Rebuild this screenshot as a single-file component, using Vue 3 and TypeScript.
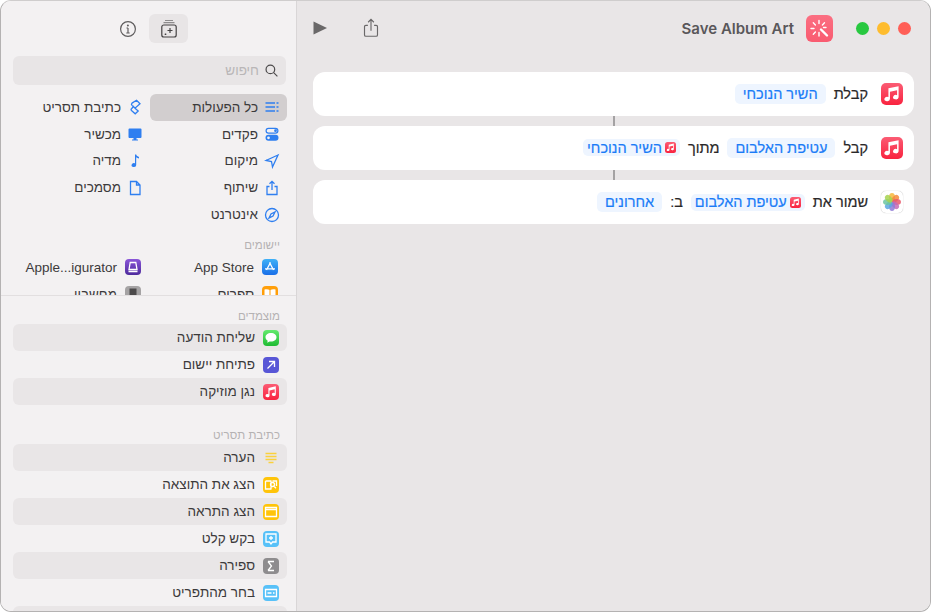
<script setup lang="ts">
interface SideItem {
  label: string
  tint: string
  icon: string
}

// filled beamed note, used on every Music tile
const musicPath =
  'M12.800 2.300L5.400 3.900V10.200a2 1.600 0 1 0 1.100 1.500V6.400L11.700 5.300V8.900a2 1.600 0 1 0 1.100 1.500z'

const categories: { label: string; icon: string; active?: boolean; solid?: boolean }[] = [
  { label: 'כל הפעולות', icon: 'M1.500 4h9.500M1.500 8h9.500M1.500 12h9.500M12.500 4h2M12.500 8h2M12.500 12h2', active: true },
  { label: 'כתיבת תסריט', icon: 'M9.500 1.300l3.500 3.400-5 4.500-3-2.800c-1-1-.6-1.700 0-2.300zM8 9.200l3.200 2.800-3 2.800-3.700-3.300c-.7-.7-.5-1.300 0-1.800L7 7' },
  { label: 'פקדים', solid: true, icon: 'M4.500 1.700h7a3 3 0 0 1 0 6h-7a3 3 0 0 1 0-6zM4.500 2.900a1.800 1.800 0 0 0 0 3.600h7a1.800 1.800 0 0 0 0-3.600zM11.500 3.300a1.400 1.400 0 1 1 0 2.800a1.400 1.400 0 0 1 0-2.800zM4.500 8.800h7a3 3 0 0 1 0 6h-7a3 3 0 0 1 0-6zM4.500 10.400a1.400 1.400 0 1 0 0 2.800a1.400 1.400 0 0 0 0-2.800z' },
  { label: 'מכשיר', solid: true, icon: 'M2.500 2.500h11a1 1 0 0 1 1 1v7.500a1 1 0 0 1-1 1H9.500v1.500h1.500v1H5v-1h1.500V12H2.500a1 1 0 0 1-1-1V3.500a1 1 0 0 1 1-1z' },
  { label: 'מיקום', icon: 'M14 2L2 7.500l5.500 1 1 5.500z' },
  { label: 'מדיה', solid: true, icon: 'M8 1.500h1.200c.3 1.500 1.600 2 2.800 2.400v1.600c-1.100-.2-2.100-.6-2.800-1.300V12a2.300 2 0 1 1-1.200-1.700z' },
  { label: 'שיתוף', icon: 'M5.500 6.500H3v8h10v-8h-2.500M8 10V1.500M5.500 3.800L8 1.300l2.500 2.500' },
  { label: 'מסמכים', icon: 'M3.500 1.500h6l3.500 3.500v9.500H3.500zM9.500 1.500V5H13' },
  { label: 'אינטרנט', icon: 'M8 1.500a6.500 6.500 0 1 1 0 13a6.500 6.500 0 0 1 0-13zM11 5L9 9 5 11l2-4z' }
]

const apps: SideItem[] = [
  { label: 'App Store', tint: 'tint-store', icon: 'M8.500 3.500L4.500 11M7.500 3.500l4 7.500M3 9.800h10' },
  { label: 'Apple...igurator', tint: 'tint-config', icon: 'M5.200 3.500h5.600l1.200 7h-8zM3.500 12.500h9' },
  { label: 'ספרים', tint: 'tint-books', icon: 'M2.500 3.500c2-.5 4-.3 5 .5v8.500c-1-.8-3-1-5-.5zM13.500 3.500c-2-.5-4-.3-5 .5v8.500c1-.8 3-1 5-.5z' },
  { label: 'מחשבון', tint: 'tint-calc', icon: 'M4.500 2.500h7v11h-7zM4.500 6h7' }
]

const pinned: SideItem[] = [
  { label: 'שליחת הודעה', tint: 'tint-msg', icon: 'M8 3C4.700 3 2.500 4.900 2.500 7.300c0 1.500.9 2.800 2.200 3.500l-.5 2 2.300-1.300c.5.100 1 .1 1.500.1 3.300 0 5.500-1.900 5.500-4.300S11.300 3 8 3z' },
  { label: 'פתיחת יישום', tint: 'tint-open', icon: 'M4.500 11.500l7-7M6 4.500h5.500V10' },
  { label: 'נגן מוזיקה', tint: 'tint-music', icon: musicPath }
]

const scripting: SideItem[] = [
  { label: 'הערה', tint: 'tint-note', icon: 'M2.500 3.500h11M2.500 6.500h11M2.500 9.500h11M5.500 12.500h5' },
  { label: 'הצג את התוצאה', tint: 'tint-yellow', icon: 'M2.500 4h6M2.500 4v8h6M9.500 4h4v5M8 4v8M9.500 5.500a2 2 0 1 1 0 4a2 2 0 0 1 0-4zM11 9.200l2 2' },
  { label: 'הצג התראה', tint: 'tint-yellow', icon: 'M2.500 3.500h11v9h-11zM2.500 5.500h11' },
  { label: 'בקש קלט', tint: 'tint-blue', icon: 'M3 3h10v8H9.500L8 13l-1.500-2H3zM8 5v4M6 7h4' },
  { label: 'ספירה', tint: 'tint-gray', icon: 'M5 3.500h6M5 12.500h6M5 3.500L8.500 8 5 12.500' },
  { label: 'בחר מהתפריט', tint: 'tint-blue', icon: 'M2.500 4.500h11v7h-11zM4.500 8h4M10 8h1.500' },
  { label: '', tint: 'tint-gray', icon: '' }
]

const petals = [
  { angle: 0, color: '#f6b73c' },
  { angle: 45, color: '#f58a3c' },
  { angle: 90, color: '#e8596b' },
  { angle: 135, color: '#c46bb5' },
  { angle: 180, color: '#8f7ad6' },
  { angle: 225, color: '#5aa7e0' },
  { angle: 270, color: '#6cc6a0' },
  { angle: 315, color: '#a6d24f' }
]
</script>

<template>
  <div class="window">
    <aside class="sidebar">
      <div class="side-toolbar">
        <svg class="info" viewBox="0 0 18 18">
          <circle cx="9" cy="9" r="7.400" />
          <path d="M9 8v5M7.500 8H9M7.300 13h3.400" />
          <circle class="dot" cx="8.900" cy="5.400" r="1" />
        </svg>
        <button class="add-btn">
          <svg viewBox="0 0 20 20">
            <path class="faint" d="M6 1.500h8M4.500 3.700h11" />
            <rect x="2.800" y="6" width="14.400" height="12" rx="2" />
            <path d="M11 9v5M8.500 11.500h5M6.500 14.500v1.600M5.700 15.300h1.600" />
          </svg>
        </button>
      </div>

      <div class="search" dir="rtl">
        <svg viewBox="0 0 16 16">
          <circle cx="6.800" cy="6.800" r="4.600" />
          <path d="M10.300 10.300l4 4" />
        </svg>
        <span>חיפוש</span>
      </div>

      <div class="cats-pane" dir="rtl">
        <div class="cat-grid">
          <div v-for="cat in categories" :key="cat.label" class="cat" :class="{ active: cat.active, solid: cat.solid }">
            <svg viewBox="0 0 16 16"><path :d="cat.icon" /></svg>
            <span>{{ cat.label }}</span>
          </div>
        </div>
        <div class="section-label apps-label">יישומים</div>
        <div class="cat-grid">
          <div v-for="app in apps" :key="app.label" class="app">
            <span class="app-icon" :class="app.tint">
              <svg viewBox="0 0 16 16"><path :d="app.icon" /></svg>
            </span>
            <span>{{ app.label }}</span>
          </div>
        </div>
      </div>

      <div class="actions-pane" dir="rtl">
        <div class="section-label">מוצמדים</div>
        <div v-for="item in pinned" :key="item.label" class="action">
          <span class="app-icon" :class="item.tint">
            <svg viewBox="0 0 16 16"><path :d="item.icon" /></svg>
          </span>
          <span>{{ item.label }}</span>
        </div>
        <div class="section-label second">כתיבת תסריט</div>
        <div v-for="item in scripting" :key="item.label" class="action">
          <span v-if="item.icon" class="app-icon" :class="item.tint">
            <svg viewBox="0 0 16 16"><path :d="item.icon" /></svg>
          </span>
          <span>{{ item.label }}</span>
        </div>
      </div>
    </aside>

    <main class="main">
      <header class="toolbar">
        <svg class="play" viewBox="0 0 14 14"><path d="M0.500 0.500L14 7 0.500 13.500z" /></svg>
        <svg class="share" viewBox="0 0 18 22">
          <path d="M5.500 8H3.200a1.500 1.500 0 0 0-1.500 1.500v9.300a1.500 1.500 0 0 0 1.500 1.500h11.600a1.500 1.500 0 0 0 1.500-1.500V9.500A1.500 1.500 0 0 0 14.800 8h-2.300M9 14V1.500M5.800 4.500L9 1.300l3.200 3.200" />
        </svg>
        <div class="title">Save Album Art</div>
        <div class="title-icon">
          <svg viewBox="0 0 27 27">
            <path d="M13 5.500v3M13 17.500v3.500M5 13.500h3M7.300 7.800l2.100 2.100M18.500 7.800l-2.100 2.100M7.300 19.200l2.100-2.100M17.500 12.500h2.500" />
            <path class="wand" d="M15 14.500l6 6" />
          </svg>
        </div>
        <div class="lights">
          <span class="light green"></span>
          <span class="light yellow"></span>
          <span class="light red"></span>
        </div>
      </header>

      <section class="flow" dir="rtl">
        <div class="card">
          <span class="card-icon music">
            <svg viewBox="0 0 16 16"><path :d="musicPath" /></svg>
          </span>
          <span class="word">קבלת</span>
          <span class="pill">השיר הנוכחי</span>
        </div>
        <div class="link"></div>
        <div class="card">
          <span class="card-icon music">
            <svg viewBox="0 0 16 16"><path :d="musicPath" /></svg>
          </span>
          <span class="word">קבל</span>
          <span class="pill">עטיפת האלבום</span>
          <span class="word">מתוך</span>
          <span class="pill slim">
            <span class="mini music"><svg viewBox="0 0 16 16"><path :d="musicPath" /></svg></span>
            השיר הנוכחי
          </span>
        </div>
        <div class="link"></div>
        <div class="card">
          <span class="card-icon photos">
            <svg viewBox="0 0 22 22">
              <ellipse
                v-for="petal in petals"
                :key="petal.angle"
                cx="11"
                cy="6.400"
                rx="3"
                ry="4.400"
                :fill="petal.color"
                fill-opacity="0.85"
                :transform="`rotate(${petal.angle} 11 11)`"
              />
            </svg>
          </span>
          <span class="word">שמור את</span>
          <span class="pill slim">
            <span class="mini music"><svg viewBox="0 0 16 16"><path :d="musicPath" /></svg></span>
            עטיפת האלבום
          </span>
          <span class="word">ב:</span>
          <span class="pill">אחרונים</span>
        </div>
      </section>
    </main>
  </div>
</template>

<style>
html,
body {
  margin: 0;
  background: #fff;
}
</style>

<style scoped>
.window {
  box-sizing: border-box;
  width: 931px;
  height: 612px;
  display: flex;
  overflow: hidden;
  border: 1px solid #b4b2b2;
  border-top-color: #cfcdcd;
  border-radius: 11px;
  font-family: "Liberation Sans", Arial, sans-serif;
  font-size: 13.500px;
  color: #3c3a3b;
}

/* sidebar */
.sidebar {
  flex: none;
  width: 296px;
  box-sizing: border-box;
  display: flex;
  flex-direction: column;
  background: #f3f1f2;
  border-right: 1px solid #d9d6d7;
}
.side-toolbar {
  height: 42px;
  padding-top: 13px;
  padding-left: 118px;
  display: flex;
  align-items: flex-start;
  gap: 12px;
}
.info {
  width: 18px;
  height: 18px;
  margin-top: 6px;
  fill: none;
  stroke: #5f5d5e;
  stroke-width: 1.200;
}
.info .dot {
  fill: #5f5d5e;
  stroke: none;
}
.add-btn {
  width: 39px;
  height: 29px;
  padding: 0;
  border: 0;
  border-radius: 6px;
  background: #e8e5e6;
  display: flex;
  align-items: center;
  justify-content: center;
}
.add-btn svg {
  width: 20px;
  height: 20px;
  fill: none;
  stroke: #444243;
  stroke-width: 1.200;
}
.add-btn .faint {
  stroke: #8d8b8c;
}
.search {
  height: 29px;
  margin: 0 10px 0 12px;
  padding: 0 7px;
  display: flex;
  align-items: center;
  gap: 5px;
  border-radius: 6px;
  background: #e8e5e6;
  color: #b9b6b7;
}
.search svg {
  width: 15px;
  height: 15px;
  fill: none;
  stroke: #4d4b4c;
  stroke-width: 1.300;
}
.cats-pane {
  height: 201px;
  margin-top: 9px;
  padding: 0 9px 0 11px;
  overflow: hidden;
  flex: none;
}
.cat-grid {
  display: grid;
  grid-template-columns: 137px 137px;
}
.cat,
.app {
  height: 27px;
  display: flex;
  align-items: center;
  border-radius: 6px;
  white-space: nowrap;
}
.cat {
  height: 26.800px;
  padding-right: 7px;
  gap: 6px;
}
.cat svg {
  flex: none;
  width: 16px;
  height: 16px;
  fill: none;
  stroke: #2f7ff0;
  stroke-width: 1.300;
}
.cat.solid svg {
  fill: #2f7ff0;
  fill-rule: evenodd;
  stroke: none;
}
.cat.active {
  background: #d2cecf;
}
.app {
  padding-right: 9px;
  gap: 8px;
}
.section-label {
  padding-right: 7px;
  font-size: 11.500px;
  color: #b5b2b3;
}
.apps-label {
  margin-top: 11px;
  margin-bottom: 3px;
}
.app-icon {
  flex: none;
  width: 16px;
  height: 16px;
  border-radius: 4px;
  display: flex;
}
.app-icon svg {
  width: 16px;
  height: 16px;
  fill: none;
  stroke: #fff;
  stroke-width: 1.300;
}
.tint-store { background: linear-gradient(#3fb1f7, #1a6fe8); }
.tint-config { background: linear-gradient(#8a56d8, #4d2a9c); }
.tint-books { background: #ff9f0a; }
.tint-calc { background: #a5a3a4; }
.tint-calc svg { fill: #4c4a4b; stroke: none; }
.tint-books svg { fill: #fff; stroke: none; }
.tint-msg { background: linear-gradient(#64ea6e, #1fbb33); }
.tint-msg svg { fill: #fff; stroke: none; }
.tint-open { background: #5856d6; }
.tint-music { background: linear-gradient(#fb5c74, #f9233f); }
.tint-music svg { fill: #fff; stroke: none; }
.tint-note svg { stroke: #fbd13d; stroke-width: 1.400; }
.tint-yellow { background: #ffc40a; }
.tint-blue { background: #58c1f8; }
.tint-gray { background: #8e8c8e; }
.actions-pane {
  flex: 1;
  min-height: 0;
  overflow: hidden;
  padding: 0 9px 0 12px;
  border-top: 1px solid #e2dfe0;
  background: #f3f1f2;
}
.actions-pane .section-label {
  padding-top: 12px;
  padding-right: 7px;
  height: 16px;
  line-height: 16px;
}
.actions-pane .section-label.second {
  padding-top: 22px;
  height: 17px;
}
.action {
  height: 27px;
  padding-right: 8px;
  display: flex;
  align-items: center;
  gap: 8px;
  border-radius: 6px;
}
.action:nth-of-type(even) {
  background: #e9e6e7;
}

/* main area */
.main {
  flex: 1;
  min-width: 0;
  background: #e9e6e7;
}
.toolbar {
  height: 54px;
  padding: 0 19px 0 16px;
  display: flex;
  align-items: center;
}
.play {
  width: 14px;
  height: 14px;
  fill: #6a6869;
}
.share {
  width: 16px;
  height: 20px;
  margin-left: 36px;
  fill: none;
  stroke: #6a6869;
  stroke-width: 1.300;
}
.title {
  margin-left: auto;
  font-family: Inter, sans-serif;
  font-size: 15px;
  font-weight: 600;
  color: #59575a;
}
.title-icon {
  width: 27px;
  height: 27px;
  margin-left: 12px;
  border-radius: 6px;
  background: linear-gradient(#fb6f82, #f95b70);
}
.title-icon svg {
  display: block;
  fill: none;
  stroke: #fff;
  stroke-width: 1.400;
  stroke-linecap: round;
}
.title-icon .wand {
  stroke-width: 2.400;
}
.lights {
  margin-left: 23px;
  display: flex;
  gap: 8px;
}
.light {
  width: 13px;
  height: 13px;
  border-radius: 50%;
}
.green { background: #28c840; }
.yellow { background: #febc2e; }
.red { background: #ff5f57; }

.flow {
  padding: 16.500px 16px 0;
  display: flex;
  flex-direction: column;
  color: #2a2829;
}
.card {
  height: 44px;
  padding-right: 11px;
  display: flex;
  align-items: center;
  border-radius: 12px;
  background: #fff;
  font-size: 14.500px;
  -webkit-text-stroke: 0.200px currentColor;
}
.link {
  width: 2px;
  height: 10.330px;
  align-self: center;
  background: #a4a2a3;
}
.card-icon {
  flex: none;
  width: 22px;
  height: 22px;
  margin-left: 13px;
  border-radius: 5px;
  display: flex;
}
.card-icon.music,
.mini.music {
  background: linear-gradient(#fb5c74, #f9233f);
}
.card-icon svg {
  width: 22px;
  height: 22px;
  fill: #fff;
}
.card-icon.photos {
  background: #fff;
  box-shadow: 0 0 1px rgba(0, 0, 0, 0.35);
}
.word {
  margin-left: 8px;
}
.pill {
  height: 20px;
  padding: 0 8px;
  margin-left: 8px;
  display: inline-flex;
  align-items: center;
  border-radius: 5px;
  background: #eef5ff;
  color: #1a7cf7;
  white-space: nowrap;
}
.pill.slim {
  height: 17px;
  padding: 0 4px;
  gap: 3px;
}
.mini {
  width: 11px;
  height: 11px;
  border-radius: 2.500px;
  display: flex;
}
.mini svg {
  width: 11px;
  height: 11px;
  fill: #fff;
  stroke: none;
}
</style>
